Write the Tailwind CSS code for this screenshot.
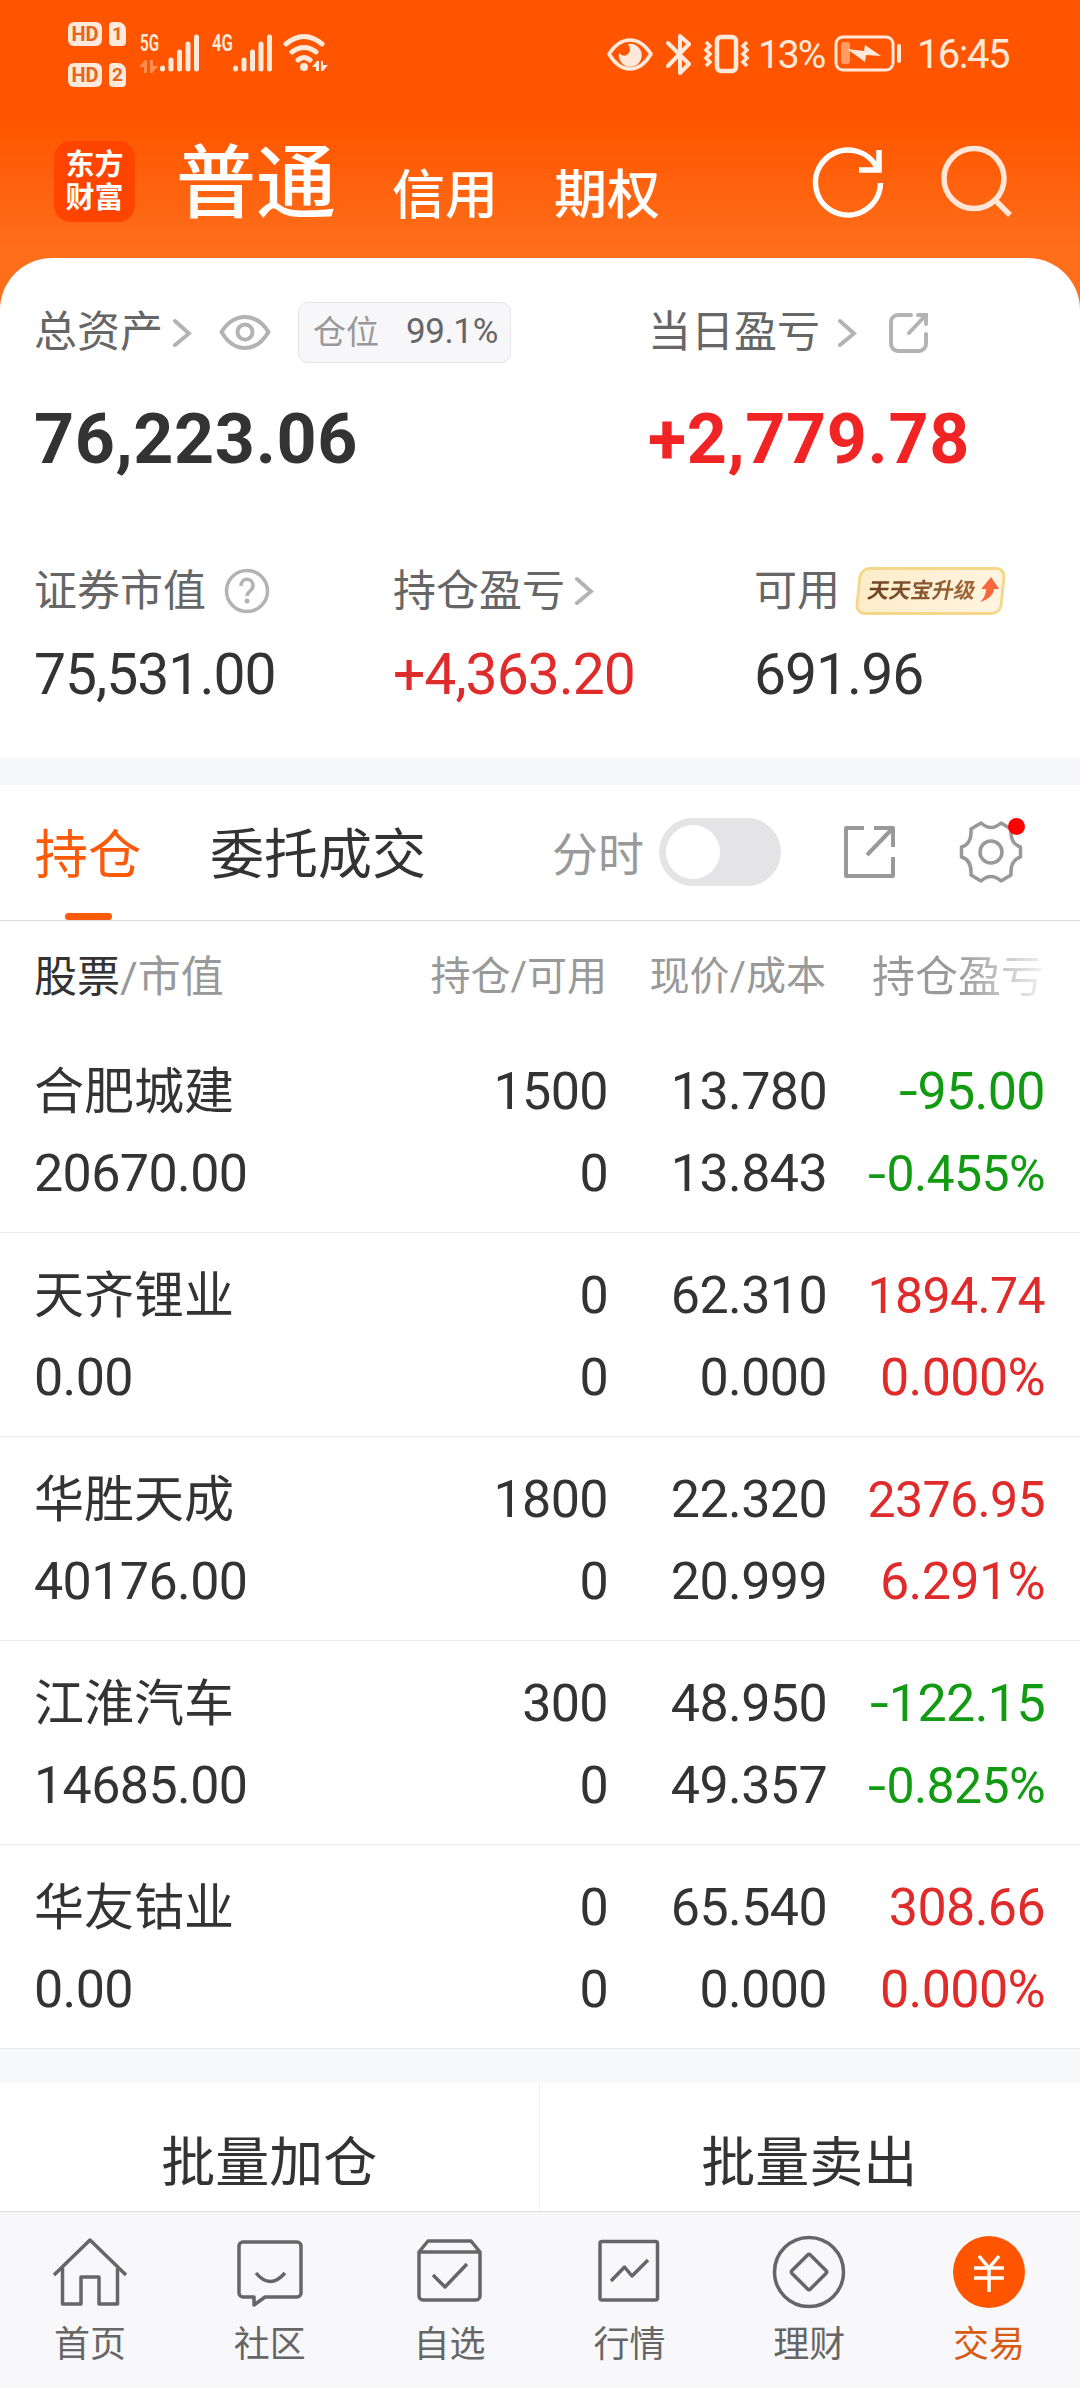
<!DOCTYPE html>
<html lang="zh-CN">
<head>
<meta charset="utf-8">
<title>交易 - 持仓</title>
<script src="https://cdn.jsdelivr.net/npm/@tailwindcss/browser@4"></script>
</head>

<body class="w-[1080px] h-[2388px] overflow-hidden flex flex-col text-[#333] whitespace-nowrap font-[Roboto,'Noto_Sans_CJK_SC',sans-serif] bg-[linear-gradient(to_bottom,#ff5500_120px,#ff6e1a_250px)]">

<!-- status bar -->
<div class="h-[106px] shrink-0 flex items-start justify-between pl-[68px] pr-[71px] text-[#ffe9da]">
    <div class="flex">
        <div class="pt-[22px] flex flex-col gap-[17px] text-[#e8641c] font-bold leading-[24px]">
            <div class="flex gap-[7px]">
                <span class="w-[34px] h-6 rounded-[6px] bg-[#ffe9da] text-[20px] text-center">HD</span>
                <span class="w-[17px] h-6 rounded-[4px] rounded-tr-[8px] bg-[#ffe9da] text-[19px] text-center">1</span>
            </div>
            <div class="flex gap-[7px]">
                <span class="w-[34px] h-6 rounded-[6px] bg-[#ffe9da] text-[20px] text-center">HD</span>
                <span class="w-[17px] h-6 rounded-[4px] rounded-tr-[8px] bg-[#ffe9da] text-[19px] text-center">2</span>
            </div>
        </div>
        <svg class="ml-[13px] mt-[28px]" width="62" height="48" viewBox="0 0 62 48" fill="none">
            <text x="1" y="23" textLength="19" lengthAdjust="spacingAndGlyphs" font-size="23" font-weight="600" fill="#ffe9da">5G</text>
            <path d="M0 39l6-7h2v13H5v-6zM11 32h3v6h5l-6 7h-2z" fill="#ff8c52"/>
            <path d="M23.500 40v1M32 32v9M40.500 24v17M49 16v25M57.500 9v32" stroke="#ffe9da" stroke-width="5" stroke-linecap="round"/>
        </svg>
        <svg class="ml-[11px] mt-[28px]" width="62" height="48" viewBox="0 0 62 48" fill="none">
            <text x="0" y="23" textLength="21" lengthAdjust="spacingAndGlyphs" font-size="23" font-weight="600" fill="#ffe9da">4G</text>
            <path d="M23.500 40v1M32 32v9M40.500 24v17M49 16v25M57.500 9v32" stroke="#ffe9da" stroke-width="5" stroke-linecap="round"/>
        </svg>
        <svg class="ml-[7px] mt-[29px]" width="48" height="44" viewBox="0 0 48 44" fill="none" stroke="#ffe9da" stroke-width="5" stroke-linecap="round">
            <path d="M5 15q18-15 36 0M11 23q12-9 24 0M17 31q6-5 12 0"/>
            <circle cx="23" cy="38" r="4" fill="#ffe9da" stroke="none"/>
            <path d="M31 38l5-6h2v10h-3v-4zM40 32h2v4h5l-5 6h-2z" fill="#ffe9da" stroke="none"/>
        </svg>
    </div>
    <div class="flex pt-[32px]">
        <svg width="46" height="44" viewBox="0 0 46 44" fill="none" stroke="#ffe9da" stroke-width="3.500" stroke-linejoin="round">
            <path d="M2 22Q11 8 23 8t21 14Q35 37 23 37T2 22z"/>
            <path d="M21 12a11.500 11.500 0 1 1-9 9q5 5 9 1t0-10z" fill="#ffe9da" stroke="none"/>
        </svg>
        <svg class="ml-[13px]" width="26" height="44" viewBox="0 0 26 44" fill="none" stroke="#ffe9da" stroke-width="4" stroke-linecap="round" stroke-linejoin="round">
            <path d="M2 11l21 21-9 9V4l9 8L2 34"/>
        </svg>
        <svg class="ml-[11px]" width="48" height="44" viewBox="0 0 48 44" fill="none" stroke="#ffe9da">
            <rect x="14" y="5" width="19" height="34" rx="4" stroke-width="4.500"/>
            <path d="M3 10l4 4-4 4 4 4-4 4 4 4-4 4M44 10l-4 4 4 4-4 4 4 4-4 4 4 4" stroke-width="3.500"/>
        </svg>
        <span class="ml-[7px] text-[39px] leading-[46px] tracking-[-2px] w-[74px]">13%</span>
        <svg class="ml-[2px]" width="70" height="44" viewBox="0 0 70 44" fill="none">
            <rect x="2" y="5" width="57" height="33" rx="7" stroke="#ffe9da" stroke-width="3"/>
            <rect x="7" y="10" width="9" height="22" rx="3" fill="#ff9c66"/>
            <path d="M13 17l17 2 1-6 16 11-15-1-1 7z" fill="#ffe9da"/>
            <rect x="63" y="12" width="4" height="19" rx="2" fill="#ffe9da"/>
        </svg>
        <span class="ml-[13px] text-[40px] leading-[46px] tracking-[-1.500px]">16:45</span>
    </div>
</div>

<!-- account tabs -->
<div class="h-[152px] shrink-0 flex items-start pl-[54px] text-white">
    <div class="mt-[35px] w-[81px] h-[81px] rounded-[17px] bg-[#ff4400] text-[29px] leading-[33px] font-bold text-center pt-[8px]">东方<br>财富</div>
    <span class="ml-[41px] mt-[28px] text-[80px] leading-[100px] font-medium">普通</span>
    <span class="ml-[56px] mt-[60px] text-[53px] leading-[60px] font-medium">信用</span>
    <span class="ml-[56px] mt-[60px] text-[53px] leading-[60px] font-medium">期权</span>
    <svg class="ml-[150px] mt-[39px]" width="76" height="76" viewBox="0 0 76 76" fill="none" stroke="#fff" stroke-width="5.500">
        <path d="M70.500 38A32.500 32.500 0 1 1 68 25"/>
        <path d="M69 5v20H49"/>
    </svg>
    <svg class="ml-[54px] mt-[38px]" width="76" height="76" viewBox="0 0 76 76" fill="none" stroke="#ffe6d6" stroke-width="5.500">
        <circle cx="34" cy="34.500" r="30"/>
        <path d="M55 56l15 15"/>
    </svg>
</div>

<!-- assets -->
<section class="h-[500px] shrink-0 bg-white rounded-t-[52px] pl-[34px]">
    <div class="flex items-center h-[61px] mt-[44px] text-[43px] text-[#666]">
        <div class="w-[614px] flex items-center">
            <span>总资产</span>
            <svg class="ml-[9px]" width="20" height="32" viewBox="0 0 20 32" fill="none" stroke="#b3b3b3" stroke-width="4" stroke-linecap="round"><path d="M3 4l14 12.500L3 28"/></svg>
            <svg class="ml-[27px]" width="52" height="38" viewBox="0 0 52 38" fill="none" stroke="#b3b3b3" stroke-width="4">
                <path d="M2.500 18Q12 3 26 3t23.500 15Q40 34 26 34T2.500 18z" stroke-linejoin="round"/>
                <circle cx="26" cy="18" r="7.500"/>
            </svg>
            <span class="ml-[27px] w-[213px] h-[61px] flex items-center rounded-[10px] border border-[#e4e4e6] bg-[#f7f7fa] pl-[14px]">
                <span class="text-[33px] text-[#999]">仓位</span>
                <span class="ml-[27px] text-[35px] tracking-[-0.400px] text-[#666]">99.1%</span>
            </span>
        </div>
        <span>当日盈亏</span>
        <svg class="ml-[17px]" width="20" height="32" viewBox="0 0 20 32" fill="none" stroke="#b3b3b3" stroke-width="4" stroke-linecap="round"><path d="M3 4l14 12.500L3 28"/></svg>
        <svg class="ml-[31px]" width="42" height="42" viewBox="0 0 42 42" fill="none" stroke="#b3b3b3" stroke-width="4" stroke-linecap="round">
            <path d="M23 3H10a7 7 0 0 0-7 7v22a7 7 0 0 0 7 7h21a7 7 0 0 0 7-7V22"/>
            <path d="M30 3h8v9M37 4L21 21"/>
        </svg>
    </div>
    <div class="flex mt-[36px] text-[70px] leading-[80px] font-bold tracking-[0.600px]">
        <span class="w-[614px]">76,223.06</span>
        <span class="text-[#f02424]">+2,779.78</span>
    </div>
    <div class="flex items-center h-[50px] mt-[87px] text-[43px] text-[#666]">
        <div class="w-[359px] flex items-center">
            <span>证券市值</span>
            <svg class="ml-[18px]" width="46" height="46" viewBox="0 0 46 46" fill="none">
                <circle cx="23" cy="23" r="20.500" stroke="#b3b3b3" stroke-width="3.500"/>
                <path d="M17 18c0-9 12-9 12 0 0 5-6 5-6 10" stroke="#b3b3b3" stroke-width="3.500"/>
                <circle cx="23" cy="33" r="2.500" fill="#b3b3b3"/>
            </svg>
        </div>
        <div class="w-[361px] flex items-center">
            <span>持仓盈亏</span>
            <svg class="ml-[9px]" width="20" height="32" viewBox="0 0 20 32" fill="none" stroke="#b3b3b3" stroke-width="4" stroke-linecap="round"><path d="M3 4l14 12.500L3 28"/></svg>
        </div>
        <span>可用</span>
        <div class="ml-[17px] w-[147px] h-[48px] -skew-x-6 flex items-center pl-[8px] rounded-[10px] border-[3px] border-[#f5d78c] bg-linear-to-r from-[#fcecc9] to-[#fff4e0]">
            <span class="text-[21.500px] font-bold -skew-x-6 bg-linear-to-r from-[#6b4322] to-[#a3683a] bg-clip-text text-transparent">天天宝升级</span>
            <svg class="ml-[3px] mb-[3px] skew-x-6" width="20" height="28" viewBox="0 0 20 28"><path d="M12 1l8 12h-5q-1 9-14 13 6-6 6-13H2z" fill="#f9683c"/></svg>
        </div>
    </div>
    <div class="flex mt-[24px] text-[57px] leading-[70px] tracking-[-1px]">
        <span class="w-[359px]">75,531.00</span>
        <span class="w-[361px] text-[#e02b2b]">+4,363.20</span>
        <span>691.96</span>
    </div>
</section>
<div class="h-[27px] shrink-0 bg-[#f6f7fa]"></div>

<!-- position tabs -->
<div class="h-[136px] shrink-0 bg-white border-b border-[#dcdcdc] flex pl-[35px]">
    <div class="w-[106px] flex flex-col items-center">
        <span class="mt-[41px] text-[53.500px] leading-[60px] text-[#fb5a0b]">持仓</span>
        <span class="mt-[27px] w-[47px] h-[7px] rounded-full bg-[#fb5a0b]"></span>
    </div>
    <span class="ml-[69px] mt-[41px] text-[54px] leading-[60px]">委托成交</span>
    <span class="ml-[126px] mt-[40px] text-[46px] leading-[60px] text-[#999]">分时</span>
    <span class="ml-[15px] mt-[33px] w-[122px] h-[68px] rounded-full bg-[#e4e4e6] p-[7px]"><span class="block size-[54px] rounded-full bg-white"></span></span>
    <svg class="ml-[61px] mt-[39px]" width="56" height="56" viewBox="0 0 56 56" fill="none" stroke="#999" stroke-width="4" stroke-linejoin="round">
        <path d="M22 4H4v48h47V33"/>
        <path d="M32 4h19v19M51 4L25 31"/>
    </svg>
    <div class="relative ml-[61px] mt-[35px]">
        <svg width="64" height="64" viewBox="-32 -32 64 64" fill="none" stroke="#999" stroke-width="3.500" stroke-linejoin="round">
            <path d="M-10-29Q0-20 10-29L20-23Q19-8 29.500-5V5Q19 8 20 23L10 29Q0 20-10 29L-20 23Q-19 8-29.500 5V-5Q-19-8-20-23z"/>
            <circle r="11"/>
        </svg>
        <span class="absolute -top-[2px] right-[-2px] size-[17px] rounded-full bg-[#ff0000]"></span>
    </div>
</div>

<!-- positions -->
<div class="bg-white shrink-0">
    <div class="h-[108px] pt-[26px] pl-[34px] grid grid-cols-[1fr_220px_219px_218px] pr-[36px] items-start text-[40px] leading-[60px] text-[#999] text-right">
        <span class="text-left text-[43px]"><span class="text-[#333]">股票</span>/市值</span>
        <span>持仓/可用</span>
        <span>现价/成本</span>
        <span class="text-[43px]"><span class="bg-linear-to-r from-[#999] from-50% to-[#f2f2f2] bg-clip-text text-transparent">持仓盈亏</span></span>
    </div>
    <div class="h-[204px] pt-[22px] pl-[34px] pr-[35px] grid grid-cols-[1fr_220px_219px_218px] border-b border-[#ebebeb] text-[52px] leading-[82px] tracking-[-0.600px] text-right content-start">
        <span class="text-left text-[50px] tracking-normal">合肥城建</span><span>1500</span><span>13.780</span><span class="text-[#129b12]"><span class="inline-block scale-x-130 mr-[3px]">-</span>95.00</span>
        <span class="text-left">20670.00</span><span>0</span><span>13.843</span><span class="text-[#129b12] text-[50px]"><span class="inline-block scale-x-130 mr-[3px]">-</span>0.455%</span>
    </div>
    <div class="h-[204px] pt-[22px] pl-[34px] pr-[35px] grid grid-cols-[1fr_220px_219px_218px] border-b border-[#ebebeb] text-[52px] leading-[82px] tracking-[-0.600px] text-right content-start">
        <span class="text-left text-[50px] tracking-normal">天齐锂业</span><span>0</span><span>62.310</span><span class="text-[#e02b2b] text-[50px]">1894.74</span>
        <span class="text-left">0.00</span><span>0</span><span>0.000</span><span class="text-[#e02b2b]">0.000%</span>
    </div>
    <div class="h-[204px] pt-[22px] pl-[34px] pr-[35px] grid grid-cols-[1fr_220px_219px_218px] border-b border-[#ebebeb] text-[52px] leading-[82px] tracking-[-0.600px] text-right content-start">
        <span class="text-left text-[50px] tracking-normal">华胜天成</span><span>1800</span><span>22.320</span><span class="text-[#e02b2b] text-[50px]">2376.95</span>
        <span class="text-left">40176.00</span><span>0</span><span>20.999</span><span class="text-[#e02b2b]">6.291%</span>
    </div>
    <div class="h-[204px] pt-[22px] pl-[34px] pr-[35px] grid grid-cols-[1fr_220px_219px_218px] border-b border-[#ebebeb] text-[52px] leading-[82px] tracking-[-0.600px] text-right content-start">
        <span class="text-left text-[50px] tracking-normal">江淮汽车</span><span>300</span><span>48.950</span><span class="text-[#129b12]"><span class="inline-block scale-x-130 mr-[3px]">-</span>122.15</span>
        <span class="text-left">14685.00</span><span>0</span><span>49.357</span><span class="text-[#129b12] text-[50px]"><span class="inline-block scale-x-130 mr-[3px]">-</span>0.825%</span>
    </div>
    <div class="h-[204px] pt-[22px] pl-[34px] pr-[35px] grid grid-cols-[1fr_220px_219px_218px] border-b border-[#ebebeb] text-[52px] leading-[82px] tracking-[-0.600px] text-right content-start">
        <span class="text-left text-[50px] tracking-normal">华友钴业</span><span>0</span><span>65.540</span><span class="text-[#e02b2b]">308.66</span>
        <span class="text-left">0.00</span><span>0</span><span>0.000</span><span class="text-[#e02b2b]">0.000%</span>
    </div>
</div>
<div class="h-[34px] shrink-0 bg-[#f6f8fa]"></div>

<!-- batch actions -->
<div class="h-[128px] shrink-0 bg-white grid grid-cols-2 text-[54px] leading-[60px] text-center pr-px">
    <span class="pt-[51px] border-r border-[#f0f0f0]">批量加仓</span>
    <span class="pt-[51px]">批量卖出</span>
</div>

<!-- bottom nav -->
<nav class="flex-1 bg-[#f8f8fa] border-t border-[#dfdfe1] grid grid-cols-6 justify-items-center content-start pt-[22px] pr-px text-[36px] leading-[44px] text-[#666] text-center">
    <div class="flex flex-col items-center gap-[13px]">
        <svg width="76" height="76" viewBox="0 0 76 76" fill="none" stroke="#666" stroke-width="3.500" stroke-linejoin="round">
            <path d="M2 41L38 6l36 35"/>
            <path d="M10.500 34v36H29V43h18v27h18.500V34"/>
        </svg>
        <span>首页</span>
    </div>
    <div class="flex flex-col items-center gap-[13px]">
        <svg width="76" height="76" viewBox="0 0 76 76" fill="none" stroke="#666" stroke-width="3.500" stroke-linejoin="round">
            <path d="M11 8h54a4 4 0 0 1 4 4v47a4 4 0 0 1-4 4H33l-11 8v-8H11a4 4 0 0 1-4-4V12a4 4 0 0 1 4-4z"/>
            <path d="M24 39q14 17 29 0"/>
        </svg>
        <span>社区</span>
    </div>
    <div class="flex flex-col items-center gap-[13px]">
        <svg width="76" height="76" viewBox="0 0 76 76" fill="none" stroke="#666" stroke-width="3.500" stroke-linejoin="round">
            <path d="M7 18l9-11h43l9 11v44a4 4 0 0 1-4 4H11a4 4 0 0 1-4-4zM7 18h61"/>
            <path d="M21 41l12 12 22-23"/>
        </svg>
        <span>自选</span>
    </div>
    <div class="flex flex-col items-center gap-[13px]">
        <svg width="76" height="76" viewBox="0 0 76 76" fill="none" stroke="#666" stroke-width="3.500" stroke-linejoin="round">
            <rect x="9" y="7.500" width="57.500" height="58.500" rx="2"/>
            <path d="M20 47l13.500-14L41 42l16-16"/>
        </svg>
        <span>行情</span>
    </div>
    <div class="flex flex-col items-center gap-[13px]">
        <svg width="76" height="76" viewBox="0 0 76 76" fill="none" stroke="#666" stroke-width="3.500">
            <circle cx="38" cy="38" r="34.500"/>
            <rect x="25" y="25" width="26" height="26" rx="2" transform="rotate(45 38 38)"/>
        </svg>
        <span>理财</span>
    </div>
    <div class="flex flex-col items-center gap-[13px] text-[#d95a12]">
        <svg width="76" height="76" viewBox="0 0 76 76" fill="none" stroke="#fff" stroke-width="3.500">
            <circle cx="38" cy="38" r="36" fill="#ff5500" stroke="none"/>
            <path d="M28 22l10 12 10-12M38 34v24M23 34h30M23 44h30"/>
        </svg>
        <span>交易</span>
    </div>
</nav>

</body>
</html>
